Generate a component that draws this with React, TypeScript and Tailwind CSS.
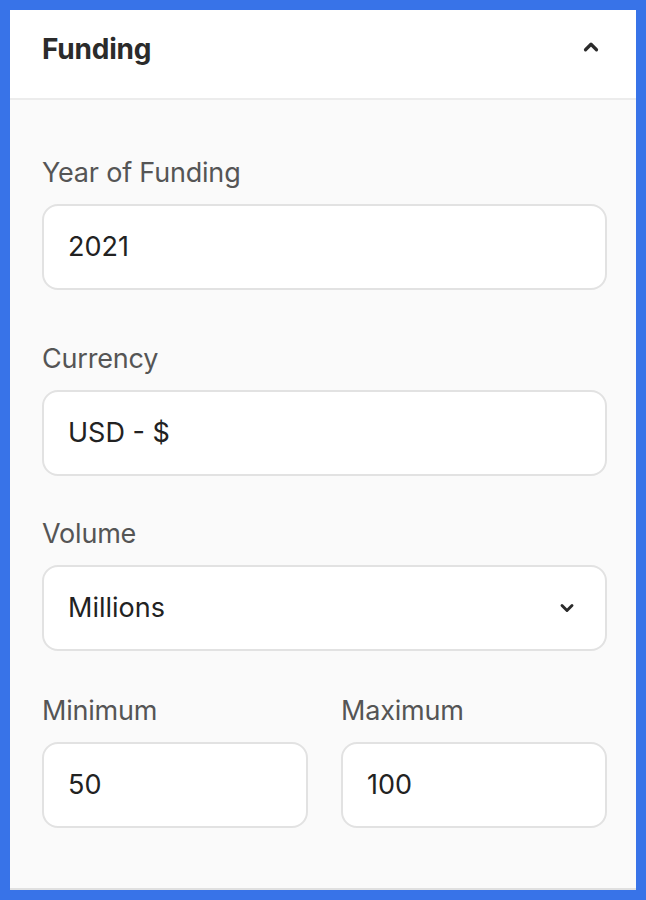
import { ChevronDown, ChevronUp } from "lucide-react";

type FieldProps = {
  label: string;
  value: string;
  select?: boolean;
};

function Field({ label, value, select }: FieldProps) {
  return (
    <div className="flex flex-col">
      <label className="mb-[15px] text-[27px] leading-[32px] tracking-[-0.2px] text-[#555555]">{label}</label>
      <div className="flex h-[86px] items-center justify-between rounded-[16px] border-2 border-[#e2e2e2] bg-white pl-[24px] pr-[28px]">
        <span className="text-[27px] text-[#222222]">{value}</span>
        {select && <ChevronDown className="h-[20px] w-[20px] text-[#2b2b2b]" strokeWidth={3.5} />}
      </div>
    </div>
  );
}

export default function App() {
  return (
    <div
      className="h-[900px] w-[646px] bg-[#3873e8] p-[10px]"
      style={{ fontFamily: "Inter, 'Noto Sans', sans-serif" }}
    >
      <div className="flex h-full flex-col bg-[#fafafa]">
        <header className="flex h-[90px] items-center justify-between border-b-2 border-[#ececec] bg-white pb-[10px] pl-[32px] pr-[34px]">
          <h2 className="text-[28px] font-bold tracking-[-0.2px] text-[#2b2b2b]">Funding</h2>
          <ChevronUp className="-mt-[4px] h-[22px] w-[22px] text-[#2b2b2b]" strokeWidth={3.5} />
        </header>

        <div className="flex flex-1 flex-col border-b-2 border-[#e0e0e0] pl-[32px] pr-[29px] pt-[57px]">
          <Field label="Year of Funding" value="2021" />
          <div className="mt-[53px]">
            <Field label="Currency" value="USD - $" />
          </div>
          <div className="mt-[42px]">
            <Field label="Volume" value="Millions" select />
          </div>
          <div className="mt-[44px] grid grid-cols-2 gap-[33px]">
            <Field label="Minimum" value="50" />
            <Field label="Maximum" value="100" />
          </div>
        </div>
      </div>
    </div>
  );
}
